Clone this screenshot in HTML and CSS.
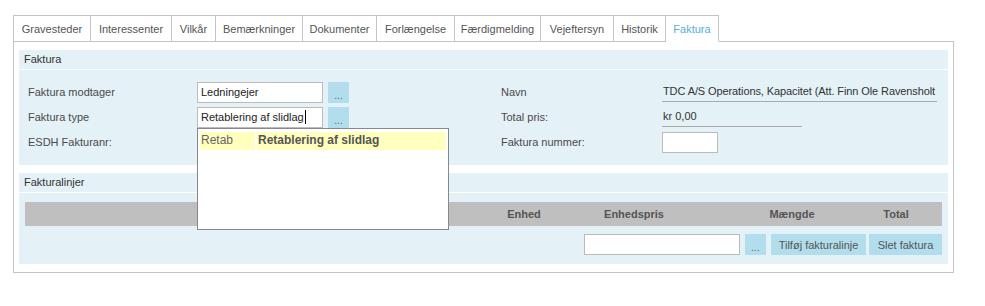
FILE: index.html
```html
<!DOCTYPE html>
<html lang="da">

<head>
  <meta charset="UTF-8">
  <meta name="viewport" content="width=device-width, initial-scale=1.0">
  <title>Faktura</title>
  <link rel="stylesheet" href="styles.css">
</head>

<body>
  <ul class="tabs">
    <li class="tab">Gravesteder</li>
    <li class="tab">Interessenter</li>
    <li class="tab">Vilkår</li>
    <li class="tab">Bemærkninger</li>
    <li class="tab">Dokumenter</li>
    <li class="tab">Forlængelse</li>
    <li class="tab">Færdigmelding</li>
    <li class="tab">Vejeftersyn</li>
    <li class="tab">Historik</li>
    <li class="tab active">Faktura</li>
  </ul>

  <div class="panel">
    <!-- Faktura -->
    <div class="section">
      <div class="section-head">Faktura</div>
      <div class="section-body cols">
        <div class="col col-left">
          <div class="row">
            <span class="label">Faktura modtager</span>
            <div class="field">Ledningejer</div>
            <button class="btn btn-dots">...</button>
          </div>
          <div class="row">
            <span class="label">Faktura type</span>
            <div class="field-wrap">
              <div class="field">Retablering af slidlag<span class="caret"></span></div>
              <div class="dropdown">
                <div class="dropdown-item">
                  <span class="code">Retab</span>
                  <span class="name">Retablering af slidlag</span>
                </div>
              </div>
            </div>
            <button class="btn btn-dots">...</button>
          </div>
          <div class="row">
            <span class="label">ESDH Fakturanr:</span>
          </div>
        </div>

        <div class="col col-right">
          <div class="row">
            <span class="label label-right">Navn</span>
            <div class="value value-long">TDC A/S Operations, Kapacitet (Att. Finn Ole Ravensholt</div>
          </div>
          <div class="row">
            <span class="label label-right">Total pris:</span>
            <div class="value value-short">kr 0,00</div>
          </div>
          <div class="row">
            <span class="label label-right">Faktura nummer:</span>
            <input type="text" class="input-small">
          </div>
        </div>
      </div>
    </div>

    <!-- Fakturalinjer -->
    <div class="section">
      <div class="section-head">Fakturalinjer</div>
      <div class="section-body">
        <div class="lines-head">
          <span></span>
          <span>Enhed</span>
          <span>Enhedspris</span>
          <span>Mængde</span>
          <span>Total</span>
        </div>
        <div class="lines-actions">
          <input type="text" class="input-line">
          <button class="btn btn-dots">...</button>
          <button class="btn btn-add">Tilføj fakturalinje</button>
          <button class="btn btn-delete">Slet faktura</button>
        </div>
      </div>
    </div>
  </div>
</body>

</html>
```

FILE: styles.css
```css
* {
  box-sizing: border-box;
}

body {
  margin: 8px;
  font-family: "Liberation Sans", Arial, sans-serif;
  font-size: 11px;
  color: #444;
  background-color: #fff;
}

/* tabs */
.tabs {
  display: flex;
  margin: 7px 0 0 5px;
  padding: 0;
  list-style: none;
  height: 27px;
}

.tab {
  height: 27px;
  line-height: 26px;
  text-align: center;
  white-space: nowrap;
  border: 1px solid #c4c4c4;
  border-left: none;
  color: #555;
  background-color: #fff;
}

.tab:first-child {
  border-left: 1px solid #c4c4c4;
}

/* tab widths as in the original app */
.tab:nth-child(1) { width: 78px; }
.tab:nth-child(2) { width: 81px; }
.tab:nth-child(3) { width: 44px; }
.tab:nth-child(4) { width: 87px; }
.tab:nth-child(5) { width: 74px; }
.tab:nth-child(6) { width: 78px; }
.tab:nth-child(7) { width: 86px; }
.tab:nth-child(8) { width: 73px; }
.tab:nth-child(9) { width: 52px; }
.tab:nth-child(10) { width: 53px; }

.tab.active {
  color: #58aede;
  border-bottom-color: #fff;
  position: relative;
  z-index: 1;
}

/* panel */
.panel {
  width: 941px;
  margin: -1px 0 0 5px;
  padding: 8px 5px;
  border: 1px solid #c4c4c4;
  display: flex;
  flex-direction: column;
  gap: 8px;
}

.section {
  background-color: #e4f1f6;
}

.section-head {
  height: 20px;
  line-height: 18px;
  padding: 0 5px;
  color: #333;
  border-bottom: 1px solid #fff;
}

.section-body {
  padding: 9px 6px;
}

.cols {
  display: flex;
  padding: 12px 9px 13px;
}

.col {
  display: flex;
  flex-direction: column;
  gap: 5px;
}

.col-left {
  width: 473px;
}

.row {
  display: flex;
  align-items: center;
  height: 20px;
}

.label {
  width: 169px;
  color: #4a4a4a;
}

.label-right {
  width: 161px;
}

.field-wrap {
  position: relative;
}

.field {
  width: 126px;
  height: 21px;
  line-height: 19px;
  padding: 0 3px;
  border: 1px solid #bbb;
  background-color: #fff;
  color: #222;
  white-space: nowrap;
  overflow: hidden;
}

.caret {
  display: inline-block;
  width: 1px;
  height: 14px;
  margin-left: 1px;
  vertical-align: -3px;
  background-color: #000;
}

.btn {
  height: 21px;
  border: none;
  padding: 0;
  background-color: #b2ddec;
  color: #555;
  font-family: inherit;
  font-size: 11px;
  white-space: nowrap;
}

.btn-dots {
  width: 21px;
  margin-left: 5px;
  padding: 6px 0 0;
  color: #666;
  font-size: 10px;
}

/* autocomplete list */
.dropdown {
  position: absolute;
  top: 100%;
  left: 0;
  width: 252px;
  height: 102px;
  padding: 3px 2px;
  border: 1px solid #888;
  background-color: #fff;
  z-index: 5;
}

.dropdown-item {
  display: flex;
  gap: 2px;
  height: 18px;
  line-height: 17px;
}

.dropdown-item span {
  background-color: #ffffbe;
  padding: 0 1px;
}

.dropdown-item .code {
  width: 55px;
  font-size: 12px;
  color: #666;
}

.dropdown-item .name {
  flex: 1;
  font-size: 12px;
  font-weight: bold;
  color: #555;
}

.value {
  height: 20px;
  line-height: 18px;
  padding: 0 1px;
  border-bottom: 1px solid #aaa;
  color: #333;
  white-space: nowrap;
}

.value-long {
  width: 275px;
  letter-spacing: -0.1px;
}

.value-short {
  width: 140px;
}

input {
  height: 21px;
  border: 1px solid #bbb;
  background-color: #fff;
  font-family: inherit;
  font-size: 11px;
}

.input-small {
  width: 56px;
}

/* fakturalinjer */
.lines-head {
  display: grid;
  grid-template-columns: 465px 68px 152px 164px 44px;
  height: 24px;
  line-height: 24px;
  background-color: #bfbfbf;
  color: #555;
  font-weight: bold;
  text-align: center;
}

.lines-actions {
  display: flex;
  justify-content: flex-end;
  align-items: center;
  margin-top: 8px;
}

.input-line {
  width: 156px;
}

.lines-actions .btn-add {
  width: 95px;
  margin-left: 5px;
}

.lines-actions .btn-delete {
  width: 73px;
  margin-left: 3px;
}
```
